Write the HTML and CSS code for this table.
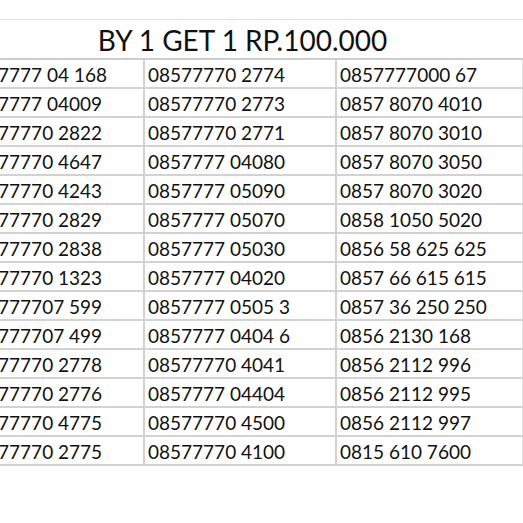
FILE: index.html
```html
<!DOCTYPE html>
<html>
<head>
<meta charset="utf-8">
<link rel="stylesheet" href="styles.css">
</head>
<body>
<div class="sheet">
  <div class="grid">
    <div class="title">BY 1 GET 1 RP.100.000</div>

    <div class="cell c1">0857777 04 168</div><div class="cell c2">08577770 2774</div><div class="cell c3">0857777000 67</div>
    <div class="cell c1">0857777 04009</div><div class="cell c2">08577770 2773</div><div class="cell c3">0857 8070 4010</div>
    <div class="cell c1">08577770 2822</div><div class="cell c2">08577770 2771</div><div class="cell c3">0857 8070 3010</div>
    <div class="cell c1">08577770 4647</div><div class="cell c2">0857777 04080</div><div class="cell c3">0857 8070 3050</div>
    <div class="cell c1">08577770 4243</div><div class="cell c2">0857777 05090</div><div class="cell c3">0857 8070 3020</div>
    <div class="cell c1">08577770 2829</div><div class="cell c2">0857777 05070</div><div class="cell c3">0858 1050 5020</div>
    <div class="cell c1">08577770 2838</div><div class="cell c2">0857777 05030</div><div class="cell c3">0856 58 625 625</div>
    <div class="cell c1">08577770 1323</div><div class="cell c2">0857777 04020</div><div class="cell c3">0857 66 615 615</div>
    <div class="cell c1">085777707 599</div><div class="cell c2">0857777 0505 3</div><div class="cell c3">0857 36 250 250</div>
    <div class="cell c1">085777707 499</div><div class="cell c2">0857777 0404 6</div><div class="cell c3">0856 2130 168</div>
    <div class="cell c1">08577770 2778</div><div class="cell c2">08577770 4041</div><div class="cell c3">0856 2112 996</div>
    <div class="cell c1">08577770 2776</div><div class="cell c2">0857777 04404</div><div class="cell c3">0856 2112 995</div>
    <div class="cell c1">08577770 4775</div><div class="cell c2">08577770 4500</div><div class="cell c3">0856 2112 997</div>
    <div class="cell c1">08577770 2775</div><div class="cell c2">08577770 4100</div><div class="cell c3">0815 610 7600</div>
  </div>
</div>
</body>
</html>
```

FILE: styles.css
```css
html, body {
  margin: 0;
  padding: 0;
  background: #ffffff;
}

.sheet {
  width: 523px;
  height: 523px;
  overflow: hidden;
  padding-top: 19px;
  box-sizing: border-box;
}

.grid {
  display: grid;
  grid-template-columns: 181px 192px 188px;
  grid-template-rows: 40px repeat(14, 29px);
  margin-left: -38px;
  width: 561px;
  font-family: Lato, "Liberation Sans", sans-serif;
  color: #111111;
  border-top: 1px solid #dedede;
}

.title {
  grid-column: 1 / 4;
  box-sizing: border-box;
  border-bottom: 2px solid #cdcdcd;
  font-size: 28px;
  display: flex;
  align-items: center;
  justify-content: center;
  padding-top: 2px;
}

.cell {
  box-sizing: border-box;
  border-bottom: 2px solid #d2d2d2;
  font-size: 19px;
  display: flex;
  align-items: center;
  padding-left: 3px;
  padding-top: 1px;
  white-space: nowrap;
}

.c2, .c3 {
  border-left: 2px solid #d2d2d2;
  padding-left: 3px;
}

.c3 {
  border-right: 1px solid #e2e2e2;
}
```
